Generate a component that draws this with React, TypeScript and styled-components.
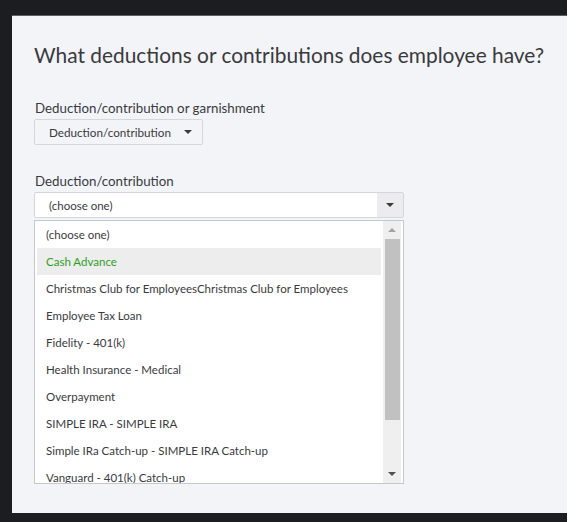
import React from "react";
import styled, { createGlobalStyle } from "styled-components";

const Global = createGlobalStyle`
  html, body { margin: 0; padding: 0; background: #ffffff; }
  body { font-family: Lato, "Open Sans", sans-serif; }
`;

const Frame = styled.div`
  width: 567px;
  height: 522px;
  box-sizing: border-box;
  background: #1b1d21;
  padding: 15px 0 9px 12px;
  display: flex;
`;

const Panel = styled.div`
  flex: 1;
  background: #f3f4f8;
  border-top: 1px solid #5a5d63;
  box-sizing: border-box;
  padding: 26px 0 0 22px;
  display: flex;
  flex-direction: column;
`;

const Heading = styled.h1`
  margin: 0 0 33px 0;
  font-size: 20.9px;
  font-weight: 400;
  color: #393a3d;
`;

const Label = styled.div`
  font-size: 13.3px;
  color: #393a3d;
  margin: 0 0 3px 1px;
`;

const Field = styled.div<{ $gap: number }>`
  display: flex;
  flex-direction: column;
  margin-bottom: ${(p) => p.$gap}px;
`;

const SmallSelect = styled.div`
  width: 169px;
  height: 26px;
  box-sizing: border-box;
  border: 1px solid #d4d6db;
  border-radius: 2px;
  background: #f3f4f8;
  display: flex;
  align-items: center;
  padding: 0 10px 0 14px;
  font-size: 11.7px;
  color: #393a3d;
  justify-content: space-between;
`;

const WideSelect = styled.div`
  width: 370px;
  height: 26px;
  box-sizing: border-box;
  border: 1px solid #d4d6db;
  border-radius: 2px;
  background: #ffffff;
  display: flex;
  align-items: stretch;
  font-size: 11.5px;
  color: #393a3d;
`;

const SelectText = styled.div`
  flex: 1;
  display: flex;
  align-items: center;
  padding-left: 14px;
`;

const ArrowBox = styled.div`
  width: 26px;
  background: #ececee;
  display: flex;
  align-items: center;
  justify-content: center;
`;

const Caret = styled.span<{ $up?: boolean; $color?: string }>`
  width: 0;
  height: 0;
  border-left: 4px solid transparent;
  border-right: 4px solid transparent;
  ${(p) =>
    p.$up
      ? `border-bottom: 4px solid ${p.$color || "#393a3d"};`
      : `border-top: 4px solid ${p.$color || "#393a3d"};`}
`;

const ListBox = styled.div`
  margin-top: 2px;
  width: 370px;
  height: 264px;
  box-sizing: border-box;
  border: 1px solid #c6c7ca;
  background: #ffffff;
  display: flex;
  overflow: hidden;
`;

const Options = styled.div`
  flex: 1;
  display: flex;
  flex-direction: column;
  padding: 0 2px 0 2px;
`;

const Option = styled.div<{ $active?: boolean }>`
  height: 27px;
  flex: none;
  display: flex;
  align-items: center;
  padding-left: 9px;
  font-size: 11.5px;
  color: ${(p) => (p.$active ? "#2ca01c" : "#393a3d")};
  background: ${(p) => (p.$active ? "#ededee" : "transparent")};
  white-space: nowrap;
`;

const ScrollBar = styled.div`
  width: 18px;
  background: #efefef;
  display: flex;
  flex-direction: column;
  align-items: center;
  margin-right: 2px;
`;

const ScrollBtn = styled.div`
  height: 18px;
  width: 100%;
  display: flex;
  align-items: center;
  justify-content: center;
`;

const Thumb = styled.div`
  width: 15px;
  height: 181px;
  background: #c1c1c1;
`;

const Track = styled.div`
  flex: 1;
`;

const items = [
  "(choose one)",
  "Cash Advance",
  "Christmas Club for EmployeesChristmas Club for Employees",
  "Employee Tax Loan",
  "Fidelity - 401(k)",
  "Health Insurance - Medical",
  "Overpayment",
  "SIMPLE IRA - SIMPLE IRA",
  "Simple IRa Catch-up - SIMPLE IRA Catch-up",
  "Vanguard - 401(k) Catch-up",
];

export default function App() {
  return (
    <>
      <Global />
      <Frame>
        <Panel>
          <Heading>What deductions or contributions does employee have?</Heading>
          <Field $gap={28}>
            <Label>Deduction/contribution or garnishment</Label>
            <SmallSelect>
              <span>Deduction/contribution</span>
              <Caret />
            </SmallSelect>
          </Field>
          <Field $gap={0}>
            <Label>Deduction/contribution</Label>
            <WideSelect>
              <SelectText>(choose one)</SelectText>
              <ArrowBox>
                <Caret />
              </ArrowBox>
            </WideSelect>
            <ListBox>
              <Options>
                {items.map((t, i) => (
                  <Option key={t} $active={i === 1}>
                    {t}
                  </Option>
                ))}
              </Options>
              <ScrollBar>
                <ScrollBtn>
                  <Caret $up $color="#a3a3a3" />
                </ScrollBtn>
                <Thumb />
                <Track />
                <ScrollBtn>
                  <Caret $color="#505050" />
                </ScrollBtn>
              </ScrollBar>
            </ListBox>
          </Field>
        </Panel>
      </Frame>
    </>
  );
}
